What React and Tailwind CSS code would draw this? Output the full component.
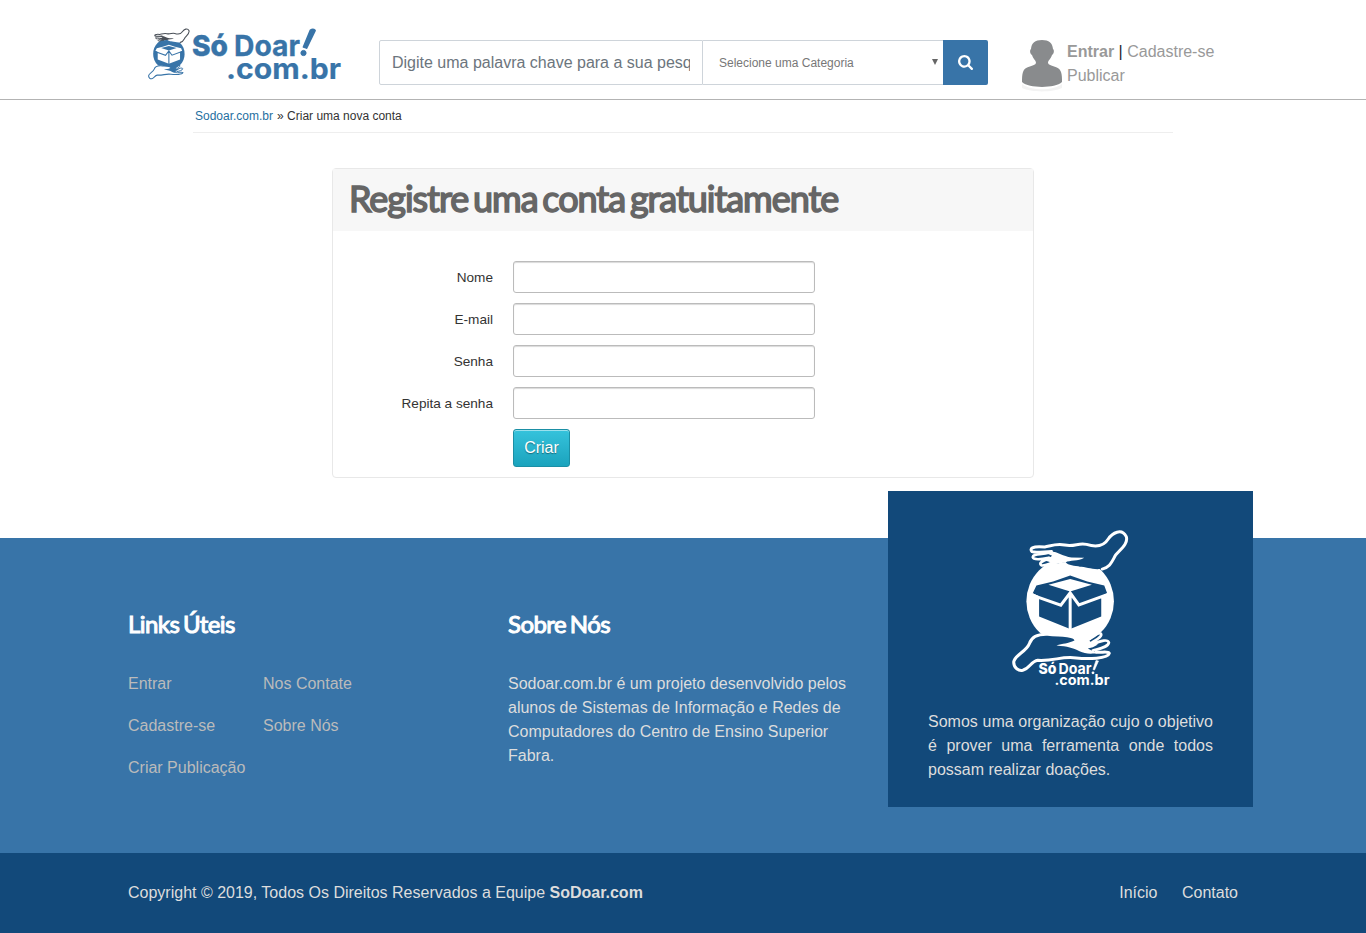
import React from "react";

function Mark({ ink, hand, paper, className }) {
  return (
    <svg viewBox="37 30 350 428" className={className} fill="none" strokeLinejoin="round" strokeLinecap="round">
      <circle cx="211" cy="243" r="131" fill={ink} />
      <g transform="translate(75 15)">
        <path d="M60 66C80 62 95 55 120 60C150 66 160 52 185 58C210 66 235 70 250 42C262 22 290 10 302 35C310 55 290 70 272 90C258 115 250 130 225 132C195 134 180 122 150 126C130 128 118 120 100 122Z" fill={paper} />
        <path d="M80 79C55 80 32 84 22 80C14 72 20 62 60 66C80 62 95 55 120 60C150 66 160 52 185 58C210 66 235 66 250 42C262 24 290 8 304 35C310 55 290 70 272 90C258 115 255 126 232 132" stroke={hand} strokeWidth="9" />
        <path d="M75 82C45 90 25 86 24 96C26 106 50 103 72 98M75 100C48 108 42 116 50 121C65 123 78 112 96 112" stroke={hand} strokeWidth="8" />
        <path d="M60 82C95 72 108 94 140 97L178 98C160 110 135 104 122 112L92 116L60 106C68 98 76 98 82 92Z" fill={hand} />
        <path d="M92 116L122 111C130 122 150 122 165 125L100 136Z" fill={ink} />
      </g>
      <path d="M211 166L262 184L313 196L322 220L304 230V289L211 326L118 289V230L99 219L110 196L160 184Z" fill={paper} />
      <path d="M211 177L276 194L211 214L146 194Z" fill={ink} />
      <path d="M95 224L183 255L211 218L237 254L326 222M211 222V326" stroke={ink} strokeWidth="9" strokeLinejoin="miter" />
      <path d="M99 219L118 228V236L99 230ZM322 219L304 228V236L322 230Z" fill={ink} />
      <g transform="translate(24 315)">
        <path d="M120 24C95 24 72 32 65 55C55 80 20 90 18 110C18 125 30 138 45 136C65 130 70 108 90 105C140 108 160 90 205 98C240 102 300 100 304 82L250 76L215 40C180 28 150 32 120 24Z" fill={paper} />
        <path d="M200 37C170 24 150 32 120 27C95 26 72 32 65 55C55 80 20 90 18 110C18 125 30 138 45 135C65 130 70 108 90 105C140 108 160 92 205 98C240 102 300 100 304 84C300 77 285 82 265 81" stroke={ink} strokeWidth="9" />
        <path d="M240 45C255 32 270 20 279 25C285 35 260 46 252 52M255 58C280 44 300 42 303 52C300 66 275 70 255 76" stroke={ink} strokeWidth="8" />
        <path d="M190 31L225 34L255 54L270 58L255 66L240 70L255 78L275 82C250 88 232 86 215 78C195 68 180 64 146 61C165 54 180 56 200 46Z" fill={ink} />
      </g>
    </svg>
  );
}

function HeaderLogo() {
  return (
    <div className="flex w-[192px] items-start">
      <Mark ink="#3874a8" hand="#4a5058" paper="#ffffff" className="h-[52px] w-[42px] shrink-0" />
      <svg viewBox="0 0 150 52" className="h-[52px] w-[150px] shrink-0 overflow-visible" fill="#3874a8" stroke="#3874a8" fontFamily="Inter, sans-serif">
        <text x="2" y="27.500" fontSize="29" fontWeight="800" strokeWidth="0.400" textLength="36" lengthAdjust="spacingAndGlyphs">Só</text>
        <text x="44" y="28" fontSize="29" fontWeight="700" strokeWidth="0.300" textLength="66" lengthAdjust="spacingAndGlyphs">Doar</text>
        <text x="36" y="50.500" fontSize="29" fontWeight="700" strokeWidth="0.200" textLength="115" lengthAdjust="spacingAndGlyphs">.com.br</text>
        <path d="M120.500 2.200Q123 0.500 125 2.500L116.500 20L113.500 19Z" strokeWidth="1.800" strokeLinejoin="round" />
        <circle cx="113.500" cy="25" r="2.600" />
      </svg>
    </div>
  );
}

function FooterLogo() {
  return (
    <div className="relative mx-auto h-[156px] w-[117px]">
      <Mark ink="#ffffff" hand="#ffffff" paper="#12497a" className="h-[143px] w-[117px]" />
      <svg viewBox="0 0 76 30" className="absolute left-[24px] top-[128px] h-[30px] w-[76px] overflow-visible" fill="#fff" fontFamily="Inter, sans-serif">
        <path d="M1 4.500L20 5L50 3.500L62 4V17H1Z" fill="#12497a" />
        <text x="2.500" y="16" fontSize="15" fontWeight="800" textLength="18" lengthAdjust="spacingAndGlyphs">Só</text>
        <text x="22.500" y="16" fontSize="15" fontWeight="700" textLength="33" lengthAdjust="spacingAndGlyphs">Doar</text>
        <text x="18.500" y="26.500" fontSize="14" fontWeight="700" textLength="55" lengthAdjust="spacingAndGlyphs">.com.br</text>
        <path d="M60 2.500L62.500 3L58.500 12L57 11.500Z" stroke="#fff" strokeWidth="0.600" />
        <circle cx="57" cy="14.800" r="1.400" />
      </svg>
    </div>
  );
}

function Avatar() {
  return (
    <svg viewBox="0 0 42 52" className="h-[52px] w-[42px]">
      <path d="M1 44C10 51 32 51 41 44V48C32 52.500 10 52.500 1 48Z" fill="#f3f3f3" />
      <path d="M21 0C28 0 31.500 3 32 9C33.500 10 33 14 31 15C30 19 27 20 27 23C28 27 38 25 40 32C41 35 41 38 41 42C34 48.500 8 48.500 1 42C1 38 1 35 2 32C4 25 14 27 15 23C15 20 12 19 11 15C9 14 8.500 10 10 9C10.500 3 14 0 21 0Z" fill="#898b8d" />
    </svg>
  );
}

function Field({ label }) {
  return (
    <div className="mb-[10px] flex h-8 items-center">
      <label className="w-[160px] pt-[2px] text-right text-[13.6px] text-[#333]">{label}</label>
      <input className="ml-5 h-8 w-[302px] rounded-[3px] border border-[#bbb] bg-white shadow-[inset_0_1px_1px_rgba(0,0,0,0.15)]" />
    </div>
  );
}

function FooterTitle({ children }) {
  return (
    <h2 className="font-[Lato] text-2xl font-normal leading-8 tracking-[-0.55px] text-white [-webkit-text-stroke:1px_#fff] [word-spacing:-2px]">{children}</h2>
  );
}

export default function App() {
  return (
    <div className="h-[933px] w-[1366px] overflow-hidden bg-white font-['Liberation_Sans',Arial,sans-serif] text-base leading-6 text-[#212529]">
      <header className="flex h-[100px] items-start border-b border-[#b3b3b3] pl-[148px]">
        <div className="mt-[28px]"><HeaderLogo /></div>
        <div className="ml-[39px] mt-10 flex h-[45px] w-[609px]">
          <div className="w-[324px] rounded-l-[2px] border border-[#ced4da] px-3">
            <div className="overflow-hidden whitespace-nowrap leading-[43px] text-[#6c757d]">Digite uma palavra chave para a sua pesquisa</div>
          </div>
          <div className="flex w-[240px] items-center justify-between border-y border-[#ced4da] pl-4 pr-[5px] text-xs text-[#777]">
            <span>Selecione uma Categoria</span>
            <svg viewBox="0 0 6 6" className="mb-[2px] h-[6px] w-[6px]"><path d="M0 0H6L3 6Z" fill="#666" /></svg>
          </div>
          <button className="flex w-[45px] items-center justify-center rounded-r-[2px] bg-[#3874a8] text-white">
            <svg viewBox="0 0 1664 1664" className="h-[15px] w-[15px] overflow-visible" fill="currentColor"><path d="M1152 704q0-185-131.500-316.500T704 256 387.500 387.500 256 704t131.500 316.500T704 1152t316.500-131.500T1152 704zm512 832q0 52-38 90t-90 38q-54 0-90-38l-343-342q-179 124-399 124-143 0-273.500-55.500t-225-150-150-225T0 704t55.500-273.500 150-225 225-150T704 0t273.500 55.500 225 150 150 225T1408 704q0 220-124 399l343 343q37 37 37 90z" /></svg>
          </button>
        </div>
        <div className="ml-[33px] mt-10"><Avatar /></div>
        <div className="ml-1 mt-10 text-[#999]">
          <div><b>Entrar</b> <span className="text-[#212529]">|</span> Cadastre-se</div>
          <div>Publicar</div>
        </div>
      </header>

      <nav className="mx-auto flex h-[33px] w-[980px] border-b border-[#eee] pl-[2px] text-xs leading-8 text-[#333]">
        <span className="mr-1 text-[#1f6f9f]">Sodoar.com.br</span>
        <span>» Criar uma nova conta</span>
      </nav>

      <main className="mx-auto mt-[35px] h-[310px] w-[702px] rounded-[4px] border border-[#e8e8e8]">
        <h1 className="h-[62px] bg-[#f7f7f7] pl-4 font-[Lato] text-[36px] font-normal leading-[58px] tracking-[-1.05px] text-[#666] [-webkit-text-stroke:1.6px_#666] [word-spacing:-3.3px]">Registre uma conta gratuitamente</h1>
        <form className="pt-[30px]">
          <Field label="Nome" />
          <Field label="E-mail" />
          <Field label="Senha" />
          <Field label="Repita a senha" />
          <button type="button" className="ml-[180px] block h-[38px] w-[57px] rounded-[3px] border border-[#1b8fa5] bg-linear-to-b from-[#35c3dc] to-[#1aa3bd] text-base text-white shadow-[inset_0_1px_0_rgba(255,255,255,0.5)] [text-shadow:0_1px_1px_rgba(0,0,0,0.4)]">Criar</button>
        </form>
      </main>

      <footer className="mt-[60px]">
        <div className="flex h-[315px] bg-[#3874a8] pl-32">
          <section className="w-[380px] pt-[70px]">
            <FooterTitle>Links Úteis</FooterTitle>
            <div className="mt-8 grid grid-cols-[135px_1fr] gap-y-[18px] text-[#bbb]">
              <span>Entrar</span><span>Nos Contate</span>
              <span>Cadastre-se</span><span>Sobre Nós</span>
              <span>Criar Publicação</span>
            </div>
          </section>
          <section className="w-[380px] pt-[70px]">
            <FooterTitle>Sobre Nós</FooterTitle>
            <p className="mt-8 w-[350px] text-[#ddd]">Sodoar.com.br é um projeto desenvolvido pelos alunos de Sistemas de Informação e Redes de Computadores do Centro de Ensino Superior Fabra.</p>
          </section>
          <aside className="-mt-[47px] h-[316px] w-[365px] bg-[#12497a] px-10 pt-[39px]">
            <FooterLogo />
            <p className="mt-6 text-justify text-[#ddd]">Somos uma organização cujo o objetivo é prover uma ferramenta onde todos possam realizar doações.</p>
          </aside>
        </div>
        <div className="flex h-20 items-center justify-between bg-[#12497a] pl-32 pr-32 text-[#ddd]">
          <div>Copyright © 2019, Todos Os Direitos Reservados a Equipe <b>SoDoar.com</b></div>
          <div className="flex gap-[24.5px]"><span>Início</span><span>Contato</span></div>
        </div>
      </footer>
    </div>
  );
}
